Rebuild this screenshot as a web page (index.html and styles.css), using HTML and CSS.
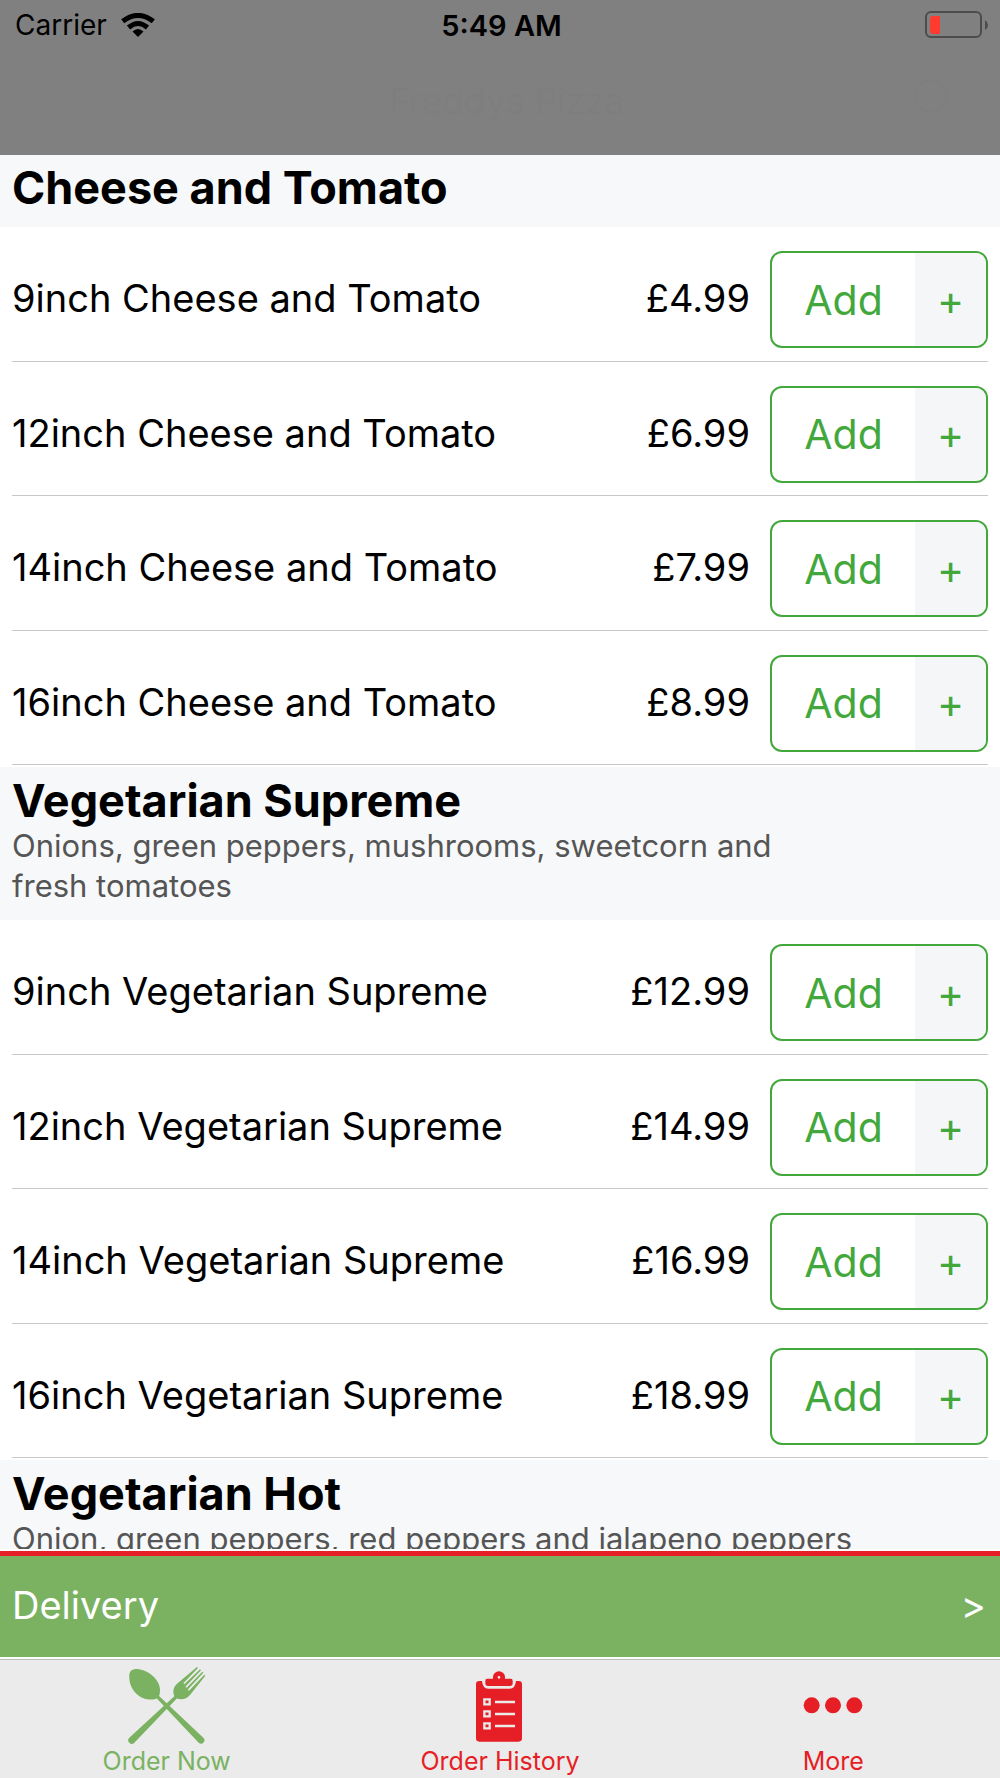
FILE: index.html
```html
<!DOCTYPE html>
<html lang="en">
<head>
<meta charset="utf-8">
<meta name="viewport" content="width=device-width, initial-scale=1">
<title>Freddys Pizza</title>
<link rel="stylesheet" href="styles.css">
</head>
<body>
<header class="top">
  <div class="status">
    <div class="status-left">
      <span>Carrier</span>
      <svg class="wifi" viewBox="0 0 34 24" aria-hidden="true">
        <path d="M17 24 L11.500 18.500 Q17 13.500 22.500 18.500 Z"/>
        <path d="M7.500 14.500 Q17 6.500 26.500 14.500" fill="none" stroke="#000" stroke-width="5"/>
        <path d="M1.700 8.300 Q17 -3.500 32.300 8.300" fill="none" stroke="#000" stroke-width="5"/>
      </svg>
    </div>
    <span class="clock">5:49 AM</span>
    <svg class="battery" viewBox="0 0 63 28" aria-hidden="true">
      <rect x="1" y="1" width="55" height="25" rx="5" fill="none" stroke="#4c4c4c" stroke-width="2"/>
      <path d="M60 9 Q63 11 63 14 Q63 17 60 19 Z" fill="#4c4c4c"/>
      <path d="M15 5 V23 H8 Q5 23 5 20 V8 Q5 5 8 5 Z" fill="#ff3b30"/>
    </svg>
  </div>
  <div class="nav">
    <button class="nav-button" type="button" aria-label="Back">
      <svg viewBox="0 0 48 52" aria-hidden="true"><path d="M36 2 L12 26 L36 50"/></svg>
    </button>
    <h1 class="nav-title">Freddys Pizza</h1>
    <button class="nav-button" type="button" aria-label="Search">
      <svg viewBox="0 0 48 52" aria-hidden="true"><circle cx="19" cy="21" r="16"/><path d="M31 33 L43 44"/></svg>
    </button>
  </div>
</header>

<main class="menu">
  <section>
    <div class="heading"><h2>Cheese and Tomato</h2></div>
    <ul class="items">
      <li class="item"><span class="name">9inch Cheese and Tomato</span><span class="price">£4.99</span><button class="add" type="button"><span class="add-label">Add</span><span class="add-plus">+</span></button></li>
      <li class="item"><span class="name">12inch Cheese and Tomato</span><span class="price">£6.99</span><button class="add" type="button"><span class="add-label">Add</span><span class="add-plus">+</span></button></li>
      <li class="item"><span class="name">14inch Cheese and Tomato</span><span class="price">£7.99</span><button class="add" type="button"><span class="add-label">Add</span><span class="add-plus">+</span></button></li>
      <li class="item"><span class="name">16inch Cheese and Tomato</span><span class="price">£8.99</span><button class="add" type="button"><span class="add-label">Add</span><span class="add-plus">+</span></button></li>
    </ul>
  </section>
  <section>
    <div class="heading">
      <h2>Vegetarian Supreme</h2>
      <p>Onions, green peppers, mushrooms, sweetcorn and<br>fresh tomatoes</p>
    </div>
    <ul class="items">
      <li class="item"><span class="name">9inch Vegetarian Supreme</span><span class="price">£12.99</span><button class="add" type="button"><span class="add-label">Add</span><span class="add-plus">+</span></button></li>
      <li class="item"><span class="name">12inch Vegetarian Supreme</span><span class="price">£14.99</span><button class="add" type="button"><span class="add-label">Add</span><span class="add-plus">+</span></button></li>
      <li class="item"><span class="name">14inch Vegetarian Supreme</span><span class="price">£16.99</span><button class="add" type="button"><span class="add-label">Add</span><span class="add-plus">+</span></button></li>
      <li class="item"><span class="name">16inch Vegetarian Supreme</span><span class="price">£18.99</span><button class="add" type="button"><span class="add-label">Add</span><span class="add-plus">+</span></button></li>
    </ul>
  </section>
  <section>
    <div class="heading">
      <h2>Vegetarian Hot</h2>
      <p>Onion, green peppers, red peppers and jalapeno peppers</p>
    </div>
  </section>
</main>

<button class="delivery" type="button"><span>Delivery</span><span>&gt;</span></button>

<nav class="tabs">
  <a class="tab tab-active" href="#order">
    <svg class="tab-icon" viewBox="0 0 270 258" aria-hidden="true">
      <path d="M22 44 C23 32 32 27 45 27 C78 29 113 58 114 88 C114 104 112 110 106 114 C100 118 88 120 76 118 C44 113 19 80 22 44 Z"/>
      <path d="M101 112 L108 105 L244 233 A10 10 0 0 1 230 248 Z"/>
      <path d="M161 105 L168 112 L37 248 A10 10 0 0 1 22 233 Z"/>
      <path d="M225 21 L228 24 L184 70 L187 73 L234 28 L237 31 L190 80 L194 83 L241 35 L244 38 L197 89 L201 92 L247 44 L250 47 L204 105 C194 118 176 122 162 114 C151 104 151 84 165 71 Z"/>
    </svg>
    <span>Order Now</span>
  </a>
  <a class="tab" href="#history">
    <svg class="tab-icon" viewBox="0 0 270 258" aria-hidden="true">
      <path d="M73 63 H81 Q83 86 100 86 H164 Q181 86 183 63 H191 Q201 63 201 73 V235 Q201 245 191 245 H73 Q63 245 63 235 V73 Q63 63 73 63 Z"/>
      <path fill-rule="evenodd" d="M96 56 H114 V50 A18 16 0 0 1 150 50 V56 H168 Q173 56 173 62 V70 Q173 78 165 78 H99 Q91 78 91 70 V62 Q91 56 96 56 Z M128 52 A4 4 0 0 0 136 52 A4 4 0 0 0 128 52 Z"/>
      <g fill="none" stroke="#ebebeb" stroke-width="7">
        <path d="M88 118 H104 V133 H88 Z M88 154 H104 V169 H88 Z M88 190 H104 V205 H88 Z"/>
        <path d="M120 126 H180 M120 162 H180 M120 198 H180"/>
      </g>
    </svg>
    <span>Order History</span>
  </a>
  <a class="tab" href="#more">
    <svg class="tab-icon" viewBox="0 0 270 258" aria-hidden="true">
      <circle cx="71" cy="136" r="24"/><circle cx="135" cy="136" r="24"/><circle cx="199" cy="136" r="24"/>
    </svg>
    <span>More</span>
  </a>
</nav>
</body>
</html>
```
FILE: styles.css
```css
* {
  box-sizing: border-box;
}

body {
  margin: 0;
  height: 100vh;
  display: flex;
  flex-direction: column;
  background: #fff;
  color: #000;
  font-family: Inter, "Liberation Sans", sans-serif;
}

h1, h2, p, ul {
  margin: 0;
  padding: 0;
}

button {
  font: inherit;
  cursor: pointer;
}

/* Status bar and dimmed navigation bar */
.top {
  flex: none;
  background: #808080;
  padding-bottom: 16px;
}

.status {
  display: grid;
  grid-template-columns: 1fr auto 1fr;
  align-items: center;
  height: 50px;
  padding: 0 12px 0 15px;
  font-size: 28px;
}

.status-left {
  display: flex;
  align-items: center;
  gap: 14px;
}

.wifi {
  width: 34px;
  height: 24px;
}

.clock {
  font-size: 29px;
  font-weight: 600;
}

.battery {
  width: 63px;
  height: 28px;
  justify-self: end;
}

.nav {
  display: flex;
  align-items: center;
  justify-content: space-between;
  height: 89px;
  padding: 12px 40px 0 54px;
  color: #7e7e7e;
}

.nav-title {
  font-size: 36px;
  font-weight: 300;
}

.nav-button {
  display: flex;
  padding: 0;
  border: 0;
  background: none;
  color: inherit;
}

.nav-button svg {
  width: 48px;
  height: 52px;
  fill: none;
  stroke: currentColor;
  stroke-width: 1;
}

/* Menu */
.menu {
  flex: 1;
  min-height: 0;
  overflow: hidden;
  border-bottom: 2px solid #fff;
}

.menu section:first-child {
  margin-top: -1px;
}

.heading {
  padding: 9px 12px 14px;
  background: #f7f8fa;
}

.heading h2 {
  font-size: 45px;
  font-weight: 700;
  line-height: 50px;
}

.heading p {
  color: #555;
  font-size: 31px;
  line-height: 40px;
}

.items {
  display: grid;
  grid-auto-rows: 1fr;
  min-height: 540px;
  padding: 0 12px 2px;
  list-style: none;
}

.item {
  display: flex;
  align-items: center;
  gap: 20px;
  padding: 24px 0 12px;
  border-bottom: 1px solid #c8c8c8;
}

.name,
.price {
  padding-bottom: 3px;
  font-size: 38px;
}

.name {
  flex: 1;
}

.add {
  display: flex;
  width: 218px;
  height: 97px;
  padding: 0;
  overflow: hidden;
  border: 2px solid #43a83c;
  border-radius: 12px;
  background: #fff;
  color: #43a83c;
  font-size: 41px;
}

.add-label,
.add-plus {
  display: flex;
  align-items: center;
  justify-content: center;
}

.add-label {
  flex: 1;
}

.add-plus {
  width: 71px;
  height: 100%;
  background: #f4f6f8;
}

.add-label {
  height: 100%;
}

/* Delivery bar */
.delivery {
  flex: none;
  display: flex;
  align-items: center;
  justify-content: space-between;
  height: 106px;
  padding: 0 14px 4px 12px;
  border: 0;
  border-top: 5px solid #e61e25;
  background: #7ab262;
  color: #fff;
  font-size: 38px;
}

/* Tab bar */
.tabs {
  flex: none;
  display: grid;
  grid-template-columns: repeat(3, 1fr);
  margin-top: 2px;
  border-top: 1px solid #bcbcbc;
  background: #ebebeb;
}

.tab {
  display: flex;
  flex-direction: column;
  align-items: center;
  padding-bottom: 2px;
  color: #e61e25;
  font-size: 25px;
  line-height: 30px;
  text-decoration: none;
}

.tab-active {
  color: #7ab262;
}

.tab-icon {
  width: 90px;
  height: 86px;
  fill: currentColor;
}
```
